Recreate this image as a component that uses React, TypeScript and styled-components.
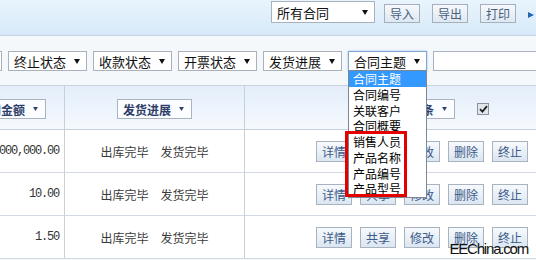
import { Fragment } from 'react'
import styled, { createGlobalStyle } from 'styled-components'

const GlobalStyle = createGlobalStyle`
  html, body {
    margin: 0;
    padding: 0;
  }
  body {
    font-family: "Noto Sans CJK SC", "Liberation Sans", sans-serif;
    font-size: 12px;
    color: #333;
    overflow: hidden;
  }
`

const Page = styled.div`
  position: relative;
  width: 536px;
  height: 260px;
  overflow: hidden;
  background: #f4f8fb;
`

const TopBar = styled.div`
  box-sizing: border-box;
  height: 36px;
  display: flex;
  align-items: flex-start;
  justify-content: flex-end;
  gap: 12px;
  padding: 1px 2px 0 0;
  border-bottom: 1px solid #c4d4e3;
  background: linear-gradient(#e9f4fd, #d6e9f8);
`

const Arrow = ({ size = 6, color = '#111' }: { size?: number; color?: string }) => (
  <svg width={size} height={size - 1} viewBox="0 0 6 5">
    <path d="M0 0H6L3 5Z" fill={color} />
  </svg>
)

const SelectBox = styled.div<{ $w: number; $h: number; $focus?: boolean }>`
  box-sizing: border-box;
  flex: none;
  width: ${(p) => p.$w}px;
  height: ${(p) => p.$h}px;
  display: flex;
  align-items: center;
  justify-content: space-between;
  padding: 0 6px 0 5px;
  background: #fff;
  border: 1px solid ${(p) => (p.$focus ? '#7fa6d6' : '#a9b2bc')};
  box-shadow: ${(p) => (p.$focus ? '0 0 2px #9cc2ee' : 'none')};
  font-size: 13px;
  color: #111;
  line-height: 1;
`

const TopSelect = styled(SelectBox)`
  margin-right: -3px;
`

const TopButton = styled.div`
  box-sizing: border-box;
  width: 36px;
  height: 19px;
  margin-top: 3px;
  display: flex;
  align-items: center;
  justify-content: center;
  border: 1px solid #a6b0bb;
  background: linear-gradient(#f6f9fc, #dde8f3);
  color: #4b5f7c;
  font-size: 12px;
`

const MoreArrow = styled.div`
  margin-top: 11px;
  width: 0;
  height: 0;
  border-top: 3px solid transparent;
  border-bottom: 3px solid transparent;
  border-left: 6px solid #2565b5;
`

const FilterRow = styled.div`
  box-sizing: border-box;
  height: 49px;
  display: flex;
  align-items: flex-start;
  gap: 6px;
  padding-top: 15px;
  margin-left: -77px;
`

const FilterText = styled.span`
  white-space: nowrap;
`

const DropWrap = styled.div`
  position: relative;
  flex: none;
`

const DropList = styled.div`
  position: absolute;
  z-index: 5;
  top: 19px;
  left: 0;
  box-sizing: border-box;
  width: 79px;
  border: 1px solid #7d8894;
  background: #fff;
`

const DropItem = styled.div<{ $active?: boolean }>`
  height: 15.75px;
  line-height: 15.75px;
  padding-left: 4px;
  font-size: 12px;
  color: ${(p) => (p.$active ? '#fff' : '#000')};
  background: ${(p) => (p.$active ? '#3399ff' : 'transparent')};
  white-space: nowrap;
`

const RedMark = styled.div`
  position: absolute;
  left: -4px;
  top: 60px;
  box-sizing: border-box;
  width: 62px;
  height: 66px;
  border: 3px solid #e50000;
  pointer-events: none;
`

const SearchInput = styled.div`
  box-sizing: border-box;
  flex: none;
  width: 140px;
  height: 20px;
  background: #fff;
  border: 1px solid #aab4c0;
`

const Table = styled.div`
  border-top: 1px solid #c8d3de;
  display: grid;
  grid-template-columns: 65px 180px 1fr;
`

const Cell = styled.div<{ $head?: boolean; $align?: 'end' | 'center' | 'start'; $last?: boolean }>`
  box-sizing: border-box;
  height: ${(p) => (p.$head ? 44 : 43)}px;
  display: flex;
  align-items: center;
  justify-content: ${(p) => (p.$align === 'end' ? 'flex-end' : p.$align === 'center' ? 'center' : 'flex-start')};
  overflow: hidden;
  border-bottom: 1px solid ${(p) => (p.$head ? '#c3cfdb' : '#d3d9e0')};
  border-right: ${(p) => (p.$last ? 'none' : '1px solid #c6d0da')};
  background: ${(p) => (p.$head ? 'linear-gradient(#e3eefa, #f5f9fd)' : '#fff')};
`

const HeadLeft = styled(Cell)`
  padding-right: 18px;
`

const NumCell = styled(Cell)`
  padding-right: 5px;
  font-family: "Liberation Mono", monospace;
  font-size: 12px;
  letter-spacing: -1.2px;
  color: #333;
`

const HeadBox = styled.div`
  box-sizing: border-box;
  flex: none;
  width: 75px;
  height: 20px;
  margin-top: 3px;
  display: flex;
  align-items: center;
  justify-content: space-between;
  padding: 0 7px 0 5px;
  border: 1px solid #aab4c0;
  background: #fbfdff;
  color: #2d3f69;
  font-size: 12px;
  font-weight: 700;
  white-space: nowrap;
`

const HeadRight = styled(Cell)`
  padding-left: 135px;
`

const CheckMark = styled.div`
  box-sizing: border-box;
  flex: none;
  width: 12px;
  height: 12px;
  margin: 2px 0 0 22px;
  display: flex;
  align-items: center;
  justify-content: center;
  border: 1px solid #8c939b;
  background: #e2e6ea;
`

const Status = styled.span`
  color: #3a3a3a;
  font-size: 12px;
  white-space: nowrap;
`

const Actions = styled(Cell)`
  gap: 8px;
  padding-left: 71px;
`

const ActionButton = styled.div`
  box-sizing: border-box;
  flex: none;
  width: 36px;
  height: 21px;
  display: flex;
  align-items: center;
  justify-content: center;
  border: 1px solid #a9b3bf;
  background: linear-gradient(#f7fafd, #dbe6f2);
  color: #3c5a88;
  font-size: 12px;
`

const Watermark = styled.div`
  position: absolute;
  right: 8px;
  bottom: 3px;
  font-family: "Liberation Sans", sans-serif;
  font-size: 15px;
  letter-spacing: -1.2px;
  color: #111;
`

const filters = ['结束状态', '终止状态', '收款状态', '开票状态', '发货进展']
const fields = ['合同主题', '合同编号', '关联客户', '合同概要', '销售人员', '产品名称', '产品编号', '产品型号']
const rows = ['1,000,000.00', '10.00', '1.50']
const actions = ['详情', '共享', '修改', '删除', '终止']

export default function App() {
  return (
    <>
      <GlobalStyle />
      <Page>
        <TopBar>
          <TopSelect $w={104} $h={22}>
            <FilterText>所有合同</FilterText>
            <Arrow />
          </TopSelect>
          <TopButton>导入</TopButton>
          <TopButton>导出</TopButton>
          <TopButton>打印</TopButton>
          <MoreArrow />
        </TopBar>

        <FilterRow>
          {filters.map((f) => (
            <SelectBox key={f} $w={79} $h={20}>
              <FilterText>{f}</FilterText>
              <Arrow />
            </SelectBox>
          ))}
          <DropWrap>
            <SelectBox $w={79} $h={20} $focus>
              <FilterText>合同主题</FilterText>
              <Arrow />
            </SelectBox>
            <DropList>
              {fields.map((f, i) => (
                <DropItem key={f} $active={i === 0}>
                  {f}
                </DropItem>
              ))}
              <RedMark />
            </DropList>
          </DropWrap>
          <SearchInput />
        </FilterRow>

        <Table>
          <HeadLeft $head $align="end">
            <HeadBox>
              合同金额
              <Arrow size={5} color="#2d3f69" />
            </HeadBox>
          </HeadLeft>
          <Cell $head $align="center">
            <HeadBox>
              发货进展
              <Arrow size={5} color="#2d3f69" />
            </HeadBox>
          </Cell>
          <HeadRight $head $last>
            <HeadBox>
              每页十条
              <Arrow size={5} color="#2d3f69" />
            </HeadBox>
            <CheckMark>
              <svg width="9" height="8" viewBox="0 0 9 8">
                <path d="M1 4.2L3.4 6.6L8 1.2" stroke="#222" strokeWidth="1.8" fill="none" />
              </svg>
            </CheckMark>
          </HeadRight>

          {rows.map((r) => (
            <Fragment key={r}>
              <NumCell $align="end">{r}</NumCell>
              <Cell $align="center">
                <Status>出库完毕　发货完毕</Status>
              </Cell>
              <Actions $last>
                {actions.map((a) => (
                  <ActionButton key={a}>{a}</ActionButton>
                ))}
              </Actions>
            </Fragment>
          ))}
        </Table>

        <Watermark>EEChina.com</Watermark>
      </Page>
    </>
  )
}
